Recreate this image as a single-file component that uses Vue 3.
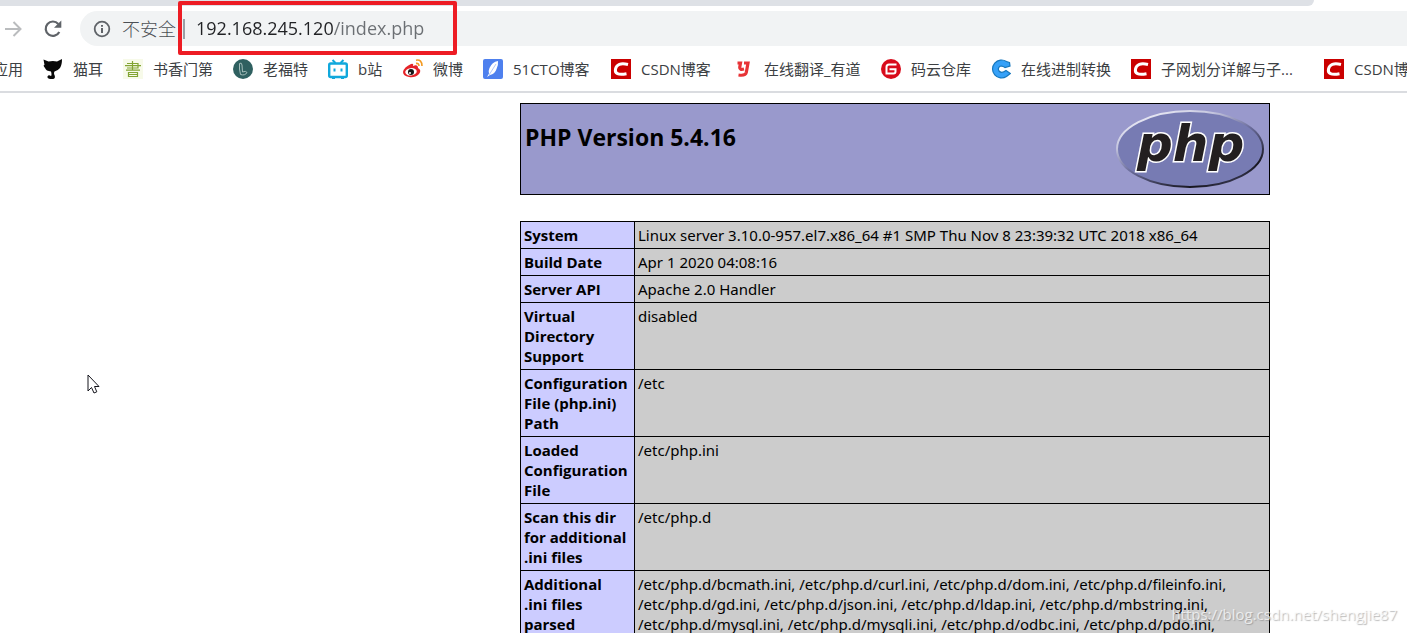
<script setup>
import { ref } from 'vue'

const address = ref('192.168.245.120/index.php')

const bookmarks = [
  { icon: 'cat', label: '猫耳', size: 'w2' },
  { icon: 'book', label: '书香门第', size: 'w4' },
  { icon: 'lofter', label: '老福特', size: 'w3' },
  { icon: 'bili', label: 'b站', size: 'wb' },
  { icon: 'weibo', label: '微博', size: 'w2' },
  { icon: 'cto', label: '51CTO博客', size: 'wcto' },
  { icon: 'csdn', label: 'CSDN博客', size: 'wcsdn' },
  { icon: 'youdao', label: '在线翻译_有道', size: 'wyd' },
  { icon: 'gitee', label: '码云仓库', size: 'w4' },
  { icon: 'convert', label: '在线进制转换', size: 'w6' },
  { icon: 'csdn', label: '子网划分详解与子...', size: 'wlong' },
  { icon: 'csdn', label: 'CSDN博客', size: 'wcsdn' },
]

const rows = [
  ['System', 'Linux server 3.10.0-957.el7.x86_64 #1 SMP Thu Nov 8 23:39:32 UTC 2018 x86_64'],
  ['Build Date', 'Apr 1 2020 04:08:16'],
  ['Server API', 'Apache 2.0 Handler'],
  ['Virtual\nDirectory\nSupport', 'disabled'],
  ['Configuration\nFile (php.ini)\nPath', '/etc'],
  ['Loaded\nConfiguration\nFile', '/etc/php.ini'],
  ['Scan this dir\nfor additional\n.ini files', '/etc/php.d'],
  [
    'Additional\n.ini files\nparsed',
    '/etc/php.d/bcmath.ini, /etc/php.d/curl.ini, /etc/php.d/dom.ini, /etc/php.d/fileinfo.ini,\n/etc/php.d/gd.ini, /etc/php.d/json.ini, /etc/php.d/ldap.ini, /etc/php.d/mbstring.ini,\n/etc/php.d/mysql.ini, /etc/php.d/mysqli.ini, /etc/php.d/odbc.ini, /etc/php.d/pdo.ini,',
  ],
]
</script>

<template>
  <div class="window">
    <header class="chrome">
      <div class="tabstrip"></div>
      <div class="toolbar">
        <button class="nav" type="button" aria-label="Forward">
          <svg width="20" height="20" viewBox="0 0 20 20" fill="none" stroke="#babcbe" stroke-width="2">
            <path d="M1 10H16M9.500 3L16.500 10L9.500 17" />
          </svg>
        </button>
        <button class="nav reload" type="button" aria-label="Reload">
          <svg width="20" height="20" viewBox="0 0 20 20">
            <path d="M16.300 13A7.200 7.200 0 1 1 15.300 4.900" fill="none" stroke="#5f6368" stroke-width="2.200" />
            <path d="M18.300 1.500V8.800H11Z" fill="#5f6368" />
          </svg>
        </button>
        <div class="omnibox">
          <button class="security" type="button">
            <svg width="18" height="18" viewBox="0 0 18 18">
              <circle cx="9" cy="9" r="7.300" fill="none" stroke="#5f6368" stroke-width="1.800" />
              <path d="M9 8V13M9 5V6.800" stroke="#5f6368" stroke-width="2" />
            </svg>
            <span>不安全</span>
          </button>
          <span class="divider"></span>
          <input v-model="address" class="address" type="text" aria-label="Address" spellcheck="false" />
          <span class="highlight"></span>
        </div>
      </div>
      <nav class="bookmarks">
        <a class="bookmark apps" href="#"><span>应用</span></a>
        <a v-for="(b, i) in bookmarks" :key="i" class="bookmark" href="#">
          <svg class="icon" width="20" height="20" viewBox="0 0 20 20">
            <g v-if="b.icon === 'cat'">
              <path d="M0.500 0.500L5.500 2.500Q10 1.500 14 2.500L19 0Q19 6 17 9Q15 11.500 11.500 12.500Q10.500 14 11.500 16Q13 20 9 20Q4 20 4.500 17.500Q5.500 15.500 8 17Q9 16 8 12.500Q3 12 2 9Q-0.500 6 1.500 6Z" fill="#080808" />
            </g>
            <g v-else-if="b.icon === 'book'">
              <rect width="20" height="20" fill="#f7fae9" />
              <path d="M4 4.500H15V9H4M2 6.700H18M3 11.200H17M9.500 2V11M5.500 13.500H14.500V17.500H5.500ZM5.500 15.500H14.500" fill="none" stroke="#82a432" stroke-width="1.200" />
            </g>
            <g v-else-if="b.icon === 'lofter'">
              <circle cx="10" cy="10" r="10" fill="#2f6060" />
              <path d="M6.500 4.500Q8.500 3 9 6L9.500 13Q13 11.500 14 13.500Q12 17 7.500 15.500Q6 10 6.500 4.500Z" fill="none" stroke="#a4bdba" stroke-width="1" />
            </g>
            <g v-else-if="b.icon === 'bili'" fill="none" stroke="#10a8dc" stroke-width="2">
              <rect x="1.200" y="4.500" width="17.600" height="13.500" rx="1.500" stroke-width="2.400" />
              <path d="M4.500 1L7.500 4M15.500 1L12.500 4M6.500 9.500V12.500M13.500 9.500V12.500M4 19H7M13 19H16" />
            </g>
            <g v-else-if="b.icon === 'weibo'">
              <path d="M8 5Q11 4 10 7Q15 5 15 9Q19 11 16 15Q12 19 6 18Q0 17 0 13Q1 8 8 5Z" fill="#e52328" />
              <ellipse cx="8" cy="12.800" rx="5.800" ry="3.700" fill="#fff" transform="rotate(-8 8 12.800)" />
              <circle cx="8" cy="13" r="3" fill="#161616" />
              <circle cx="7" cy="14" r="1" fill="#fff" />
              <path d="M13 1.200Q19 0 19 7M13 4.400Q16 4 16 7" fill="none" stroke="#f39a21" stroke-width="1.600" />
            </g>
            <g v-else-if="b.icon === 'cto'">
              <rect width="20" height="20" rx="2" fill="#4e80ee" />
              <path d="M15 2Q9 3 6.500 9Q5 12.500 6 14.500L4 18L7 16Q12 15 13.500 10Q15.500 6 15 2Z" fill="#fff" />
              <path d="M13 5L6 16" stroke="#9db9f7" stroke-width=".8" />
            </g>
            <g v-else-if="b.icon === 'csdn'">
              <rect width="20" height="20" fill="#ca0000" />
              <path d="M17 5.500Q6 3 4.500 10Q3 17 15.500 14.800" fill="none" stroke="#fff" stroke-width="3" />
            </g>
            <g v-else-if="b.icon === 'youdao'" fill="none" stroke="#e83336">
              <path d="M3.500 4H6.500L5.700 8.500Q5.500 11 10 10M10 4H14L12.300 13.500Q11.500 17 4.500 16" stroke-width="3.200" />
            </g>
            <g v-else-if="b.icon === 'gitee'">
              <circle cx="10" cy="10" r="10" fill="#d80b1b" />
              <path d="M15.500 5.500H8Q5.500 5.500 5.500 8V14.500H12.500Q14.500 14.500 14.500 12.500V10.300H8.500" fill="none" stroke="#fff" stroke-width="2" />
            </g>
            <g v-else>
              <path d="M18.500 3.500L15.500 2.500A9 9 0 1 0 15.500 17.500L19.300 14.500L15 11.500Q10.500 15 8 12Q6.300 9 9 7.300Q11.500 6.500 14 8.500L19 7Z" fill="#36a1f8" stroke="#1677bd" stroke-width="1.200" />
            </g>
          </svg>
          <span :class="b.size">{{ b.label }}</span>
        </a>
      </nav>
    </header>

    <main class="page">
      <div class="banner">
        <h1>PHP Version 5.4.16</h1>
        <svg class="logo" width="150" height="82" viewBox="0 0 150 82" role="img" aria-label="PHP logo">
          <defs>
            <linearGradient id="rim" x1="0.150" y1="0" x2="0.850" y2="1">
              <stop offset="0" stop-color="#f4f4fa" />
              <stop offset="0.250" stop-color="#c5c6df" />
              <stop offset="0.500" stop-color="#6b6d9c" />
              <stop offset="0.850" stop-color="#16151e" />
              <stop offset="1" stop-color="#55567d" />
            </linearGradient>
          </defs>
          <ellipse cx="75" cy="41" rx="73" ry="38" fill="#777bb3" stroke="url(#rim)" stroke-width="2" />
          <text x="22" y="53" class="wordmark">php</text>
        </svg>
      </div>
      <table class="info">
        <tbody>
          <tr v-for="[name, value] in rows" :key="name">
            <th scope="row">{{ name }}</th>
            <td>{{ value }}</td>
          </tr>
        </tbody>
      </table>
      <svg class="pointer" width="13" height="20" viewBox="0 0 13 20">
        <path d="M1 1V17L4.500 13.500L7 19L9.800 17.800L7.500 12.500H12Z" fill="#fff" stroke="#14141c" stroke-width="1" />
      </svg>
    </main>
    <div class="watermark">https://blog.csdn.net/shengjie87</div>
  </div>
</template>

<style>
body {
  margin: 0;
  background: #fff;
}
</style>

<style scoped>
.window {
  position: relative;
  height: 100vh;
  overflow: hidden;
  font-family: "Open Sans", "Noto Sans CJK SC", sans-serif;
  color: #000;
}
.chrome {
  border-bottom: 2px solid #dadce0;
}
.tabstrip {
  height: 6px;
  margin-right: 93px;
  background: #dee1e6;
  border-bottom-right-radius: 8px;
}
.toolbar {
  display: flex;
  align-items: center;
  height: 45px;
}
button {
  border: 0;
  padding: 0;
  background: none;
  font: inherit;
}
.nav {
  display: flex;
  width: 20px;
  margin-left: 4px;
}
.reload {
  margin-left: 19px;
}
.omnibox {
  position: relative;
  display: flex;
  flex: 1;
  align-items: center;
  height: 35px;
  margin-left: 17px;
  background: #f1f3f4;
  border-radius: 18px 0 0 18px;
}
.security {
  display: flex;
  align-items: center;
  gap: 11px;
  margin-left: 13px;
  color: #4c5055;
  font-size: 18px;
  font-weight: 300;
  line-height: 24px;
  white-space: nowrap;
}
.divider {
  width: 2px;
  height: 20px;
  margin-left: 7px;
  background: #9aa0a6;
}
.address {
  flex: 1;
  min-width: 0;
  margin-left: 11px;
  padding: 0 0 2px;
  border: 0;
  outline: 0;
  font: 18px/26px "Open Sans", sans-serif;
  color: transparent;
  background: linear-gradient(90deg, #202124 137px, #6b6f73 137px);
  background-clip: text;
  -webkit-background-clip: text;
}
.highlight {
  position: absolute;
  left: 98px;
  top: -10px;
  box-sizing: border-box;
  width: 279px;
  height: 54px;
  border: 4px solid #ed1c24;
  border-radius: 2px;
  pointer-events: none;
}
.bookmarks {
  display: flex;
  align-items: center;
  gap: 20px;
  height: 36px;
  padding-bottom: 4px;
  overflow: hidden;
}
.bookmark {
  display: flex;
  flex: none;
  align-items: center;
  gap: 10px;
  color: #3c4043;
  font-size: 15px;
  line-height: 22px;
  text-decoration: none;
  white-space: nowrap;
}
.apps {
  margin-left: -7px;
}
.icon {
  flex: none;
}
.w2 { width: 30px; }
.w3 { width: 45px; }
.w4 { width: 60px; }
.w6 { width: 90px; }
.wb { width: 25px; }
.wcto { width: 78px; }
.wcsdn { width: 73px; }
.wyd { width: 97px; }
.wlong { width: 143px; }
.page {
  position: relative;
  padding: 10px 137px 0 520px;
}
.banner {
  display: flex;
  justify-content: space-between;
  box-sizing: border-box;
  height: 92px;
  padding: 4px;
  border: 1px solid #000;
  background: #9999cc;
}
h1 {
  margin: 13px 0 0;
  font-size: 23px;
  line-height: 32px;
}
.wordmark {
  font: italic bold 50px "DejaVu Sans", sans-serif;
  fill: #231f20;
  stroke: #fff;
  stroke-width: 3px;
  paint-order: stroke;
}
.info {
  width: 100%;
  margin-top: 26px;
  table-layout: fixed;
  border-collapse: collapse;
  font-size: 15px;
  line-height: 20px;
}
th,
td {
  padding: 3px;
  border: 1px solid #000;
  text-align: left;
  vertical-align: top;
  white-space: pre-line;
}
th {
  width: 107px;
  background: #ccccff;
}
td {
  background: #cccccc;
  font-family: "Noto Sans", sans-serif;
}
.pointer {
  position: absolute;
  left: 87px;
  top: 281px;
}
.watermark {
  position: absolute;
  right: 10px;
  bottom: 9px;
  color: rgba(255, 255, 255, 0.7);
  font-size: 15px;
  line-height: 20px;
  text-shadow: 1px 1px 1px rgba(120, 120, 120, 0.5);
}
</style>
